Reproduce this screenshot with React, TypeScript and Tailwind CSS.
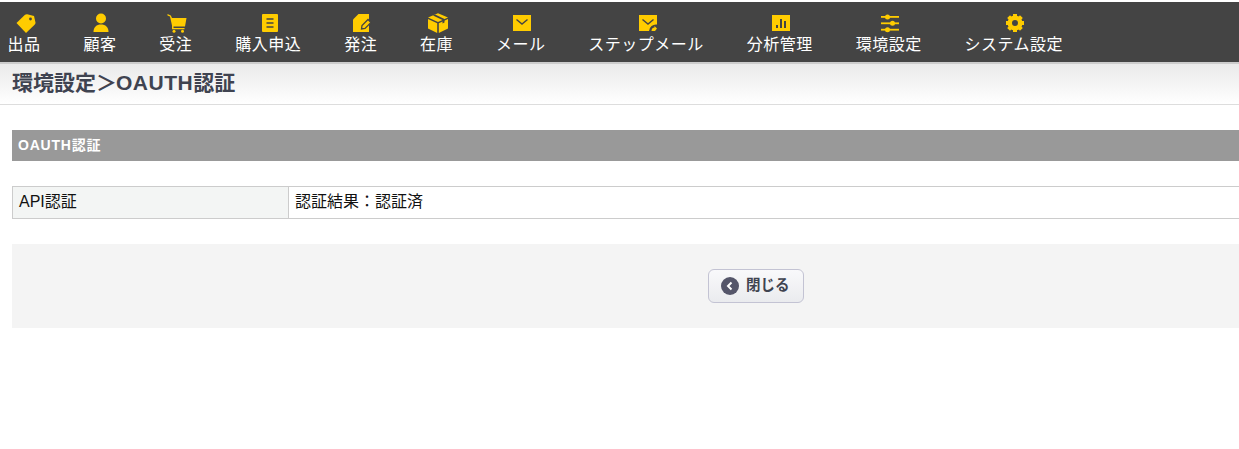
const Tag = () => (
  <svg viewBox="0 0 20 20" className="w-5 h-5" fill="#ffcc00">
    <path d="M0.5 10 L9 1.8 Q10 1 11.2 1.2 L18 3 L19.5 9.5 Q19.6 10.8 18.6 11.8 L10 20 Z" />
    <circle cx="14.5" cy="6" r="1.4" fill="#444" />
  </svg>
);

const User = () => (
  <svg viewBox="0 0 20 20" className="w-5 h-5" fill="#ffcc00">
    <circle cx="10" cy="5.5" r="5" />
    <path d="M2.5 19 C2.5 14 5.5 11.5 10 11.5 C14.5 11.5 17.5 14 17.5 19 Z" />
  </svg>
);

const Cart = () => (
  <svg viewBox="0 0 20 20" className="w-5 h-5" fill="#ffcc00">
    <path d="M0.5 1 L3.8 2.6 L5 5 L19.5 5 L18 13.5 L6.5 13.5 L6.5 15 L17.5 15 L17.5 16.3 L5 16.3 L5 12.5 L3 3.6 L0.5 2.4 Z" />
    <circle cx="7" cy="18.3" r="1.5" />
    <circle cx="15.5" cy="18.3" r="1.5" />
  </svg>
);

const Doc = () => (
  <svg viewBox="0 0 20 20" className="w-5 h-5">
    <rect x="2" y="1" width="16" height="18" rx="1" fill="#ffcc00" />
    <path d="M6.5 6 H13.5 M6.5 10 H13.5 M6.5 14 H13.5" stroke="#444" strokeWidth="1.5" />
  </svg>
);

const Note = () => (
  <svg viewBox="0 0 20 20" className="w-5 h-5">
    <path d="M6.5 1 H17 V19 H1 V6.5 Z" fill="#ffcc00" />
    <path d="M9.5 16 L10 12.5 L16 6.5 L19 9.5 L13 15.5 Z" fill="#ffcc00" stroke="#444" strokeWidth="1.3" />
  </svg>
);

const Box = () => (
  <svg viewBox="0 0 20 20" className="w-5 h-5" fill="#ffcc00">
    <path d="M10 0.2 L20 4.5 L10 9 L0 4.5 Z" />
    <path d="M0 6 L9.2 10.2 V20 L0 15.5 Z" />
    <path d="M20 6 L10.8 10.2 V20 L20 15.5 Z" />
    <path d="M5 2.6 L14.5 7 V10.5 L16.5 9.5 V6 L7 1.6 Z" fill="#444" />
  </svg>
);

const Mail = () => (
  <svg viewBox="0 0 20 20" className="w-5 h-5">
    <rect x="1" y="2" width="18" height="16" fill="#ffcc00" />
    <path d="M4.5 6.5 L10 11 L15.5 6.5" fill="none" stroke="#444" strokeWidth="1.4" />
  </svg>
);

const StepMail = () => (
  <svg viewBox="0 0 20 20" className="w-5 h-5">
    <rect x="1" y="2" width="18" height="16" fill="#ffcc00" />
    <path d="M4.5 6.5 L10 11 L15.5 6.5" fill="none" stroke="#444" strokeWidth="1.4" />
    <path d="M11 18 A7 7 0 0 1 19 11.5 V18 Z" fill="#444" />
    <path d="M13.5 18 C13.5 15.5 15 14.5 16.5 14.5 L16.5 13 L19 15.5 L17 18 Z" fill="#ffcc00" />
  </svg>
);

const Chart = () => (
  <svg viewBox="0 0 20 20" className="w-5 h-5">
    <rect x="1" y="2" width="18" height="16" fill="#ffcc00" />
    <rect x="5" y="12" width="2" height="3" fill="#444" />
    <rect x="9" y="6" width="2" height="9" fill="#444" />
    <rect x="13" y="8" width="2" height="7" fill="#444" />
  </svg>
);

const Sliders = () => (
  <svg viewBox="0 0 20 20" className="w-5 h-5" fill="#ffcc00">
    <rect x="1" y="3" width="18" height="1.8" />
    <rect x="1" y="9.4" width="18" height="1.8" />
    <rect x="1" y="15.8" width="18" height="1.8" />
    <circle cx="7.5" cy="3.9" r="2.5" />
    <circle cx="12.5" cy="10.3" r="2.5" />
    <circle cx="7.5" cy="16.7" r="2.5" />
  </svg>
);

const Gear = () => (
  <svg viewBox="0 0 20 20" className="w-5 h-5">
    <circle cx="10" cy="10" r="7.5" fill="#ffcc00" />
    <path d="M10 1 V19 M1 10 H19 M3.6 3.6 L16.4 16.4 M16.4 3.6 L3.6 16.4" stroke="#ffcc00" strokeWidth="4" />
    <circle cx="10" cy="10" r="3" fill="#444" />
  </svg>
);

const menu = [
  { label: "出品", icon: <Tag /> },
  { label: "顧客", icon: <User /> },
  { label: "受注", icon: <Cart /> },
  { label: "購入申込", icon: <Doc /> },
  { label: "発注", icon: <Note /> },
  { label: "在庫", icon: <Box /> },
  { label: "メール", icon: <Mail /> },
  { label: "ステップメール", icon: <StepMail /> },
  { label: "分析管理", icon: <Chart /> },
  { label: "環境設定", icon: <Sliders /> },
  { label: "システム設定", icon: <Gear /> },
];

export default function App() {
  return (
    <div className="min-h-[449px] bg-white font-['Noto_Sans_CJK_JP',sans-serif] overflow-hidden">
      <div className="pt-[2px]">
        <nav className="h-[60px] bg-[#444444] flex gap-[42.9px] pl-[7.5px] pt-[11px]">
          {menu.map((item) => (
            <div key={item.label} className="flex flex-col items-center">
              <div className="ml-[3px]">{item.icon}</div>
              <span className="text-[16px] leading-[20px] tracking-[0.5px] text-white whitespace-nowrap">
                {item.label}
              </span>
            </div>
          ))}
        </nav>
      </div>
      <div className="h-[43px] border-t-2 border-b border-t-[#cccccc] border-b-[#dddddd] bg-gradient-to-b from-[#eaeaea] to-white pl-3 pb-[2px] flex items-center">
        <h1 className="text-[21px] font-bold text-[#3f4350] font-['Liberation_Sans','Noto_Sans_CJK_JP',sans-serif]">
          環境設定＞<span className="tracking-[0.5px] -ml-[1px]">OAUTH</span>認証
        </h1>
      </div>
      <div className="pl-3 pt-[25px]">
        <div className="h-[31px] bg-[#999999] flex items-center pl-[6px] text-[14px] tracking-[0.8px] font-bold text-white font-['Liberation_Sans','Noto_Sans_CJK_JP',sans-serif]">
          OAUTH認証
        </div>
        <div className="mt-[25px] h-[33px] flex border-y border-[#cccccc] text-[16px] text-[#111111] font-['Liberation_Sans','Noto_Sans_CJK_JP',sans-serif]">
          <div className="w-[277px] bg-[#f3f5f4] border-x border-[#cccccc] pl-[6px] pb-[2px] flex items-center">API認証</div>
          <div className="flex-1 pl-[6px] pb-[2px] flex items-center">認証結果：認証済</div>
        </div>
        <div className="mt-[25px] h-[84px] bg-[#f4f4f4] flex items-center pl-[696px]">
          <button className="w-[96px] h-[34px] rounded-[6px] border border-[#c3c3d3] bg-gradient-to-b from-[#f9f9fb] to-[#eaebee] flex items-center pl-[12px] gap-[7px]">
            <svg viewBox="0 0 18 18" className="w-[18px] h-[18px]">
              <circle cx="9" cy="9" r="9" fill="#55566a" />
              <path d="M10.5 5.5 L7 9 L10.5 12.5" fill="none" stroke="#ffffff" strokeWidth="2" />
            </svg>
            <span className="text-[14.5px] font-bold text-[#3f4350] font-['Liberation_Sans','Noto_Sans_CJK_JP',sans-serif]">閉じる</span>
          </button>
        </div>
      </div>
    </div>
  );
}
